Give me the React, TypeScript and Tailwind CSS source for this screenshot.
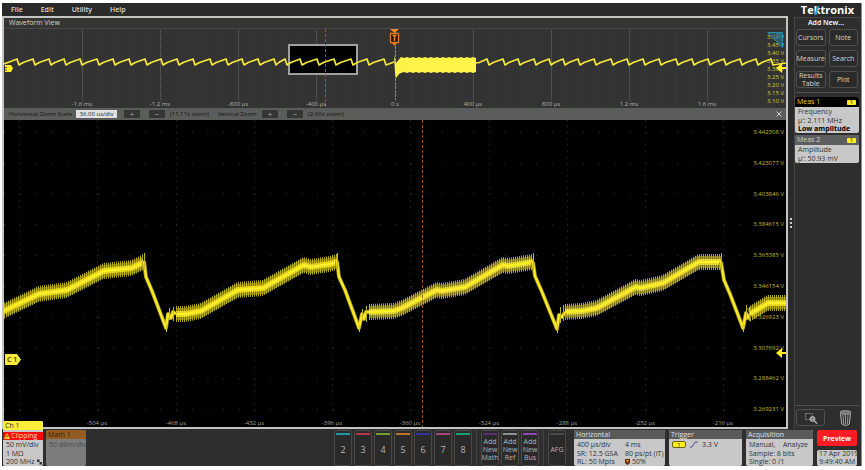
import type { ReactNode } from "react";
import clsx from "clsx";

type Point = [number, number];

const OVERVIEW = { w: 782, h: 79 };
const ZOOMED = { w: 782, h: 307 };

const MENU = ["File", "Edit", "Utility", "Help"];

const OVERVIEW_TIMES = [
  { x: 78, label: "-1.6 ms" },
  { x: 156, label: "-1.2 ms" },
  { x: 234, label: "-800 µs" },
  { x: 312, label: "-400 µs" },
  { x: 391, label: "0 s" },
  { x: 469, label: "400 µs" },
  { x: 547, label: "800 µs" },
  { x: 625, label: "1.2 ms" },
  { x: 703, label: "1.6 ms" },
];

const OVERVIEW_VOLTS = ["3.50 V", "3.45 V", "3.40 V", "3.35 V", "3.30 V", "3.25 V", "3.20 V", "3.15 V", "3.10 V"];

const ZOOMED_TIMES = [
  { x: 15, label: "-540 µs" },
  { x: 93, label: "-504 µs" },
  { x: 172, label: "-468 µs" },
  { x: 250, label: "-432 µs" },
  { x: 328, label: "-396 µs" },
  { x: 406, label: "-360 µs" },
  { x: 485, label: "-324 µs" },
  { x: 563, label: "-288 µs" },
  { x: 641, label: "-252 µs" },
  { x: 719, label: "-216 µs" },
];

const ZOOMED_VOLTS = [
  "3.442308 V",
  "3.423077 V",
  "3.403846 V",
  "3.384615 V",
  "3.365385 V",
  "3.346154 V",
  "3.326923 V",
  "3.307692 V",
  "3.288462 V",
  "3.269231 V",
];

const CHANNELS = [
  { label: "2", color: "bg-[#1f9aa0]" },
  { label: "3", color: "bg-[#b03a48]" },
  { label: "4", color: "bg-[#76a030]" },
  { label: "5", color: "bg-[#c07428]" },
  { label: "6", color: "bg-[#32329a]" },
  { label: "7", color: "bg-[#a8437c]" },
  { label: "8", color: "bg-[#14a070]" },
];

const ADD_NEW = [
  { label: "Math", color: "bg-[#5c2d70]" },
  { label: "Ref", color: "bg-[#8a9096]" },
  { label: "Bus", color: "bg-[#8a4bb8]" },
];

// Slow ramps of the zoomed trace, these carry the switching ripple
const RAMPS: Point[][] = [
  [[0, 191], [35, 174], [63, 170], [100, 151], [128, 148], [140, 142]],
  [[172, 194], [182, 194], [197, 191], [234, 170], [259, 168], [300, 145], [307, 147], [326, 144], [333, 142]],
  [[365, 192], [390, 191], [398, 188], [433, 170], [438, 171], [461, 167], [499, 145], [504, 146], [529, 142]],
  [[561, 192], [578, 191], [593, 188], [632, 167], [637, 168], [659, 163], [695, 142], [717, 142]],
  [[746, 194], [764, 183], [782, 183]],
];

const DROPS: Point[][] = [
  [[140, 141], [142, 157], [148, 171], [162, 208], [164, 194], [167, 198], [169, 192], [172, 194]],
  [[333, 141], [335, 157], [341, 170], [355, 208], [358, 194], [360, 199], [362, 192], [365, 192]],
  [[529, 142], [531, 156], [538, 172], [553, 209], [555, 195], [558, 197], [561, 192]],
  [[717, 142], [720, 160], [726, 174], [739, 208], [742, 193], [744, 198], [746, 194]],
];

// x of every peak in the overview trace
const PEAKS_BEFORE = [13, 29, 45, 60, 76, 93, 109, 125, 141, 157, 173, 189, 206, 222, 238, 254, 270, 281, 296, 313, 330, 347, 363, 380];
const PEAKS_AFTER = [483, 499, 514, 530, 545, 559, 574, 590, 607, 623, 639, 655, 672, 688, 704, 720, 736, 752, 767];

const toPoints = (pts: Point[]) => pts.map((p) => p.join(",")).join(" ");

function yAt(pts: Point[], x: number) {
  for (let i = 1; i < pts.length; i++) {
    const [x0, y0] = pts[i - 1];
    const [x1, y1] = pts[i];
    if (x <= x1) return y0 + ((y1 - y0) * (x - x0)) / (x1 - x0);
  }
  return pts[pts.length - 1][1];
}

function ripplePath(pts: Point[], amplitude: number) {
  let d = "";
  for (let x = pts[0][0] + 1; x < pts[pts.length - 1][0] + 1; x += 2) {
    const y = yAt(pts, x);
    d += `M${x - 0.5} ${(y - amplitude).toFixed(1)}V${(y + amplitude).toFixed(1)}`;
  }
  return d;
}

function sawtooth(start: Point, peaks: number[], end: Point) {
  const pts: Point[] = [start];
  peaks.forEach((x) => {
    const from = pts[pts.length - 1][0];
    const span = x - from;
    pts.push([from + span * 0.3, 33.5], [from + span * 0.6, 32], [x, 30], [x + 2, 36]);
  });
  pts.push(end);
  return toPoints(pts);
}

function rippleBurst() {
  let top = "";
  let bottom = "";
  for (let x = 397; x <= 472; x += 3) {
    top += `L${x} ${x % 2 ? 28 : 29}`;
    bottom = `L${x} ${x % 2 ? 44 : 43}` + bottom;
  }
  return `M390 26L392 34${top}${bottom}L395 45L392 49L391 44Z`;
}

interface AxisLabelProps {
  left?: number;
  top?: number;
  className?: string;
  children: ReactNode;
}

function AxisLabel({ left, top, className, children }: AxisLabelProps) {
  return (
    <span
      className={clsx("absolute whitespace-nowrap text-[6px] leading-[8px]", className)}
      style={{
        left: left === undefined ? undefined : `${left}%`,
        top: top === undefined ? undefined : `${top}%`,
      }}
    >
      {children}
    </span>
  );
}

function LevelArrow({ className }: { className: string }) {
  return (
    <svg viewBox="0 0 10 10" className={clsx("absolute right-0 h-[10px] w-[10px]", className)}>
      <path d="M0 5L6 0V4H10V6H6V10Z" fill="#ffee22" />
    </svg>
  );
}

function Overview() {
  return (
    <div className="relative h-[79px] shrink-0 overflow-hidden bg-[#333333]">
      <svg
        viewBox={`0 0 ${OVERVIEW.w} ${OVERVIEW.h}`}
        preserveAspectRatio="none"
        className="absolute inset-0 h-full w-full"
      >
        {Array.from({ length: 9 }, (_, i) => (
          <line key={i} x1="15.5" x2="760" y1={8.5 + i * 8} y2={8.5 + i * 8} stroke="#505050" strokeDasharray="1 14.64" />
        ))}
        {OVERVIEW_TIMES.map((t) => (
          <line key={t.label} x1={t.x + 0.5} x2={t.x + 0.5} y1="1" y2="71" stroke={t.x === 391 ? "#8a8a8a" : "#555555"} strokeDasharray="3 1" />
        ))}
        <rect x="285" y="16" width="68" height="29" fill="#000000" stroke="#a0a0a0" strokeWidth="2" />
        <line x1="321.5" x2="321.5" y1="0" y2="79" stroke="#8a6034" strokeDasharray="3 2" />
        <g fill="none" stroke="#f5e83a" strokeWidth="1.7" strokeLinejoin="round">
          <polyline points={sawtooth([0, 35], PEAKS_BEFORE, [390, 33])} />
          <polyline points={sawtooth([472, 34], PEAKS_AFTER, [782, 34])} />
        </g>
        <path d={rippleBurst()} fill="#fff34a" />
        {/* trigger marker */}
        <path d="M386 0H395L390.5 4Z" fill="#f58a25" />
        <path d="M386.5 4.5H394.5V13.5H386.5Z" fill="#1e1208" stroke="#e07a20" strokeWidth="1.3" />
        <path d="M388 14H393L390.5 17Z" fill="#e07a20" />
        <path d="M388.5 6.5H392.5M390.5 6.5V12" stroke="#f58a25" strokeWidth="1.5" />
        {/* channel marker */}
        <path d="M1 36H7L9 39.5L7 43H1Z" fill="#ffee22" />
        <path d="M1 38.5H3M1 41H3" stroke="#57501a" />
      </svg>
      {OVERVIEW_TIMES.map((t) => (
        <AxisLabel key={t.label} left={(t.x / OVERVIEW.w) * 100} className="bottom-0 -translate-x-1/2 text-[#b4b4b4]">
          {t.label}
        </AxisLabel>
      ))}
      {OVERVIEW_VOLTS.map((v, i) => (
        <AxisLabel key={v} top={((4 + i * 8) / OVERVIEW.h) * 100} className="right-[2px] text-[#d6cc38]">
          {v}
        </AxisLabel>
      ))}
      <svg viewBox="0 0 16 16" className="absolute right-[3px] top-[3px] h-4 w-4" fill="none" stroke="#2390ac">
        <path d="M0.5 0.5H15.5V15.5Z" fill="#38616c" fillOpacity="0.8" />
        <circle cx="12" cy="3.5" r="2" />
        <path d="M10.5 5L8 7.5" />
      </svg>
      <LevelArrow className="top-[34px]" />
    </div>
  );
}

function ZoomStep({ label, sign }: { label: string; sign: string }) {
  return (
    <button
      type="button"
      aria-label={label}
      className="flex h-2 w-4 items-center justify-center rounded-[1px] bg-[#353535] text-[8px] leading-none text-[#a8a8a8]"
    >
      {sign}
    </button>
  );
}

function ZoomBar() {
  return (
    <div className="flex h-3 shrink-0 items-center bg-[#5b5d5b] pl-[5px] pr-1 text-[6px] text-[#111111]">
      <label htmlFor="zoom-scale" className="w-[67px] whitespace-nowrap">
        Horizontal Zoom Scale
      </label>
      <input
        id="zoom-scale"
        defaultValue="36.00 us/div"
        className="h-2 w-[41px] bg-[#e0e0e0] text-center text-[6px] leading-[8px] text-[#222222]"
      />
      <div className="ml-[7px] flex gap-[9px]">
        <ZoomStep label="Increase horizontal zoom" sign="+" />
        <ZoomStep label="Decrease horizontal zoom" sign="−" />
      </div>
      <span className="ml-[5px] w-12 whitespace-nowrap">(11.11x zoom)</span>
      <span className="w-11 whitespace-nowrap">Vertical Zoom</span>
      <div className="flex gap-[9px]">
        <ZoomStep label="Increase vertical zoom" sign="+" />
        <ZoomStep label="Decrease vertical zoom" sign="−" />
      </div>
      <span className="ml-[5px] whitespace-nowrap">(2.60x zoom)</span>
      <button type="button" aria-label="Close zoom" className="ml-auto">
        <svg viewBox="0 0 6 6" className="h-[6px] w-[6px]">
          <path d="M0.5 0.5L5.5 5.5M5.5 0.5L0.5 5.5" stroke="#d0d0d0" />
        </svg>
      </button>
    </div>
  );
}

function ZoomedView() {
  return (
    <div className="relative min-h-0 flex-1 overflow-hidden bg-black">
      <svg
        viewBox={`0 0 ${ZOOMED.w} ${ZOOMED.h}`}
        preserveAspectRatio="none"
        className="absolute inset-0 h-full w-full"
      >
        {ZOOMED_VOLTS.map((v, i) => (
          <line key={v} x1="0" x2="750" y1={12.5 + i * 30.8} y2={12.5 + i * 30.8} stroke="#3a3a3a" strokeDasharray="1 14.65" />
        ))}
        {ZOOMED_TIMES.map((t) => (
          <line key={t.label} x1={t.x + 0.5} x2={t.x + 0.5} y1="0" y2="296" stroke="#303030" strokeDasharray="1 5.16" />
        ))}
        {RAMPS.map((pts, i) => (
          <g key={i} fill="none">
            <polyline points={toPoints(pts)} stroke="#7c7416" strokeWidth="12" />
            <path d={ripplePath(pts, 8)} stroke="#b4a820" />
            <polyline points={toPoints(pts)} stroke="#d2c424" strokeWidth="6" />
            <path d={ripplePath(pts, 3)} stroke="#f0e02a" />
            <polyline points={toPoints(pts)} stroke="#ffee2a" strokeWidth="2.5" />
          </g>
        ))}
        {DROPS.map((pts, i) => (
          <g key={i} fill="none" strokeLinejoin="round">
            <polyline points={toPoints(pts)} stroke="#8f8518" strokeWidth="4" />
            <polyline points={toPoints(pts)} stroke="#f8e828" strokeWidth="2.5" />
          </g>
        ))}
        {/* ringing right after each drop */}
        <path
          d="M140.5 133V150M333.5 133V150M529.5 133V150M717.5 133V150M165.5 188V200M169.5 187V201M358.5 189V200M362.5 186V202M556.5 187V203M559.5 185V201M742.5 185V200M745.5 187V201"
          stroke="#c4b822"
        />
        <path d="M162.5 204V212M355.5 204V212M553.5 204V213M739.5 204V212" stroke="#d8ca24" />
        <line x1="418.5" x2="418.5" y1="0" y2="307" stroke="#9a5518" strokeDasharray="3 2" />
      </svg>
      {ZOOMED_TIMES.map((t) => (
        <AxisLabel key={t.label} left={(t.x / ZOOMED.w) * 100} className="bottom-0 -translate-x-1/2 text-[#a0a0a0]">
          {t.label}
        </AxisLabel>
      ))}
      {ZOOMED_VOLTS.map((v, i) => (
        <AxisLabel key={v} top={((8 + i * 30.8) / ZOOMED.h) * 100} className="right-[2px] text-[#c4ba34]">
          {v}
        </AxisLabel>
      ))}
      <div className="absolute left-[1px] top-[234px] flex h-[11px] w-4 items-center text-[#3a3610]">
        <svg viewBox="0 0 16 11" className="absolute inset-0 h-full w-full">
          <path d="M0 0H12L16 5.5L12 11H0Z" fill="#f8ea3a" />
        </svg>
        <span className="relative pl-[2px] text-[7px] font-semibold leading-none">C 1</span>
      </div>
      <LevelArrow className="top-[228px]" />
    </div>
  );
}

function Logo() {
  return (
    <div className="flex h-[14px] items-center justify-end pr-[7px] text-[11px] font-bold leading-[14px] text-white">
      <span className="relative">
        Tektronix
        <svg viewBox="0 0 5 10" className="absolute left-[13px] top-[2px] h-[10px] w-[5px]">
          <path d="M3 1H5L2.5 10H0.5Z" fill="#22a6d8" />
        </svg>
      </span>
    </div>
  );
}

function SideButton({ children }: { children: ReactNode }) {
  return (
    <button
      type="button"
      className="flex h-[17px] items-center justify-center rounded-[3px] border border-[#505050] bg-[#2b2b2b] text-center text-[7px] leading-[8px] text-[#d4d4d4]"
    >
      {children}
    </button>
  );
}

interface MeasurementProps {
  title: string;
  active?: boolean;
  lines: string[];
  warning?: string;
}

function Measurement({ title, active, lines, warning }: MeasurementProps) {
  return (
    <section className="overflow-hidden rounded-[2px] bg-[#c8c8c8] text-[7px] text-[#333333]">
      <header
        className={clsx(
          "flex h-[10px] items-center justify-between pl-[2px] pr-[3px] leading-[10px]",
          active ? "bg-black text-[#e8dc28]" : "bg-[#5c5e60] text-[#d0d0d0]",
        )}
      >
        <h3>{title}</h3>
        <span className="flex h-[5px] w-[9px] justify-center rounded-[1px] bg-[#ffee22] text-[5px] font-bold leading-[5px] text-[#6b6214]">
          1
        </span>
      </header>
      <div className="px-[3px] leading-[9px]">
        {lines.map((line) => (
          <p key={line} className="whitespace-nowrap">{line}</p>
        ))}
        {warning && <p className="whitespace-nowrap font-bold leading-[8px] text-black">{warning}</p>}
      </div>
    </section>
  );
}

function Sidebar() {
  return (
    <aside className="flex w-[74px] shrink-0 flex-col border-r border-[#8a8a8a]">
      <Logo />
      <div className="flex min-h-0 flex-1">
        <div className="flex w-[6px] flex-col items-center justify-center gap-[2px]">
          {[0, 1, 2].map((i) => (
            <span key={i} className="h-[2px] w-[2px] bg-[#cccccc]" />
          ))}
        </div>
        <div className="flex flex-1 flex-col border-l border-t border-[#454545] bg-[#2e2e2e] pr-[2px]">
          <h2 className="pr-[2px] text-center text-[7px] font-semibold leading-[10px] text-white">Add New...</h2>
          <div className="mx-[1px] mt-[1px] grid grid-cols-2 gap-x-[3px] gap-y-1">
            <SideButton>Cursors</SideButton>
            <SideButton>Note</SideButton>
            <SideButton>Measure</SideButton>
            <SideButton>Search</SideButton>
            <SideButton>
              Results
              <br />
              Table
            </SideButton>
            <SideButton>Plot</SideButton>
          </div>
          <div className="mt-1 flex flex-col gap-[2px] border-t border-[#505050] pt-1">
            <Measurement title="Meas 1" active lines={["Frequency", "µ': 2.111 MHz"]} warning="Low amplitude" />
            <Measurement title="Meas 2" lines={["Amplitude", "µ': 50.93 mV"]} />
          </div>
          <div className="mt-auto flex items-center justify-between border-t border-[#505050] py-[3px] pl-[1px] pr-[7px]">
            <button
              type="button"
              aria-label="Zoom to area"
              className="flex h-[17px] w-[29px] items-center justify-center rounded-[3px] border border-[#505050]"
            >
              <svg viewBox="0 0 14 12" className="h-3 w-[14px]" fill="none" stroke="#b0b0b0">
                <path d="M1.5 1.5H8.5V7.5H1.5Z" strokeDasharray="2 1" stroke="#858585" />
                <circle cx="8.5" cy="7" r="2.5" fill="#8c8c8c" />
                <path d="M10.5 9L13 11.5" strokeWidth="1.5" />
              </svg>
            </button>
            <button type="button" aria-label="Delete">
              <svg viewBox="0 0 13 16" className="h-4 w-[13px]" fill="none" stroke="#b4b4b4">
                <ellipse cx="6.5" cy="2.5" rx="5.5" ry="1.7" fill="#6c6c6c" />
                <path d="M1.5 4L2.8 14C4 15.8 9 15.8 10.2 14L11.5 4" />
                <path d="M4 5L4.7 14M6.5 5V14.5M9 5L8.3 14" strokeWidth="0.8" />
              </svg>
            </button>
          </div>
        </div>
      </div>
    </aside>
  );
}

function SourceButton({ color, className, children }: { color: string; className?: string; children: ReactNode }) {
  return (
    <button
      type="button"
      className="flex h-full w-[18px] flex-col items-center rounded-[3px] border border-[#4c4846] bg-[#2a2a2a] px-[1px] pt-[2px] text-[#b4b4b4]"
    >
      <span className={clsx("h-[2px] w-[14px]", color)} />
      <span className={clsx("flex flex-1 items-center text-center", className)}>{children}</span>
    </button>
  );
}

function InfoPanel({ title, className, children }: { title: string; className: string; children: ReactNode }) {
  return (
    <section className={clsx("flex flex-col overflow-hidden rounded-[2px] bg-[#c8c8c8] text-[7px] text-[#333333]", className)}>
      <h3 className="bg-[#5a5a5a] pl-[2px] leading-[9px] text-[#e0e0e0]">{title}</h3>
      {children}
    </section>
  );
}

function BottomBar() {
  return (
    <footer className="flex h-[37px] shrink-0 border-r border-[#8a8a8a] bg-[#2e2e2e] pl-[1px] pr-1">
      <section className="relative -mt-[8px] flex w-10 flex-col overflow-hidden rounded-[2px] bg-[#c8c8c8] text-[7px] leading-[9px] text-[#333333]">
        <h3 className="bg-[#ffee3a] pl-[2px] leading-[9px]">Ch 1</h3>
        <p className="mt-[2px] flex items-center gap-[1px] bg-[#fa0a0a] pl-[1px] leading-[8px] text-[#ffd0c8]">
          <svg viewBox="0 0 6 6" className="h-[6px] w-[6px]">
            <path d="M3 0L6 6H0Z" fill="#ffe020" />
            <path d="M3 2V4.5" stroke="#5a2a00" strokeWidth="0.8" />
          </svg>
          Clipping
        </p>
        <p className="pl-[3px]">50 mV/div</p>
        <p className="pl-[3px]">1 MΩ</p>
        <p className="flex items-center justify-between whitespace-nowrap pl-[3px] pr-[1px] leading-[8px]">
          200 MHz
          <svg viewBox="0 0 6 6" className="h-[6px] w-[5px]" fill="#333333">
            <path d="M0 0H3V3H0ZM3 3H6V6H3Z" />
          </svg>
        </p>
      </section>
      <section className="ml-[3px] mt-[1px] w-10 overflow-hidden rounded-[2px] bg-[#7c7c7c] text-[7px] text-[#4c4c4c]">
        <h3 className="bg-[#925c22] pl-[2px] leading-[9px] text-[#3a2206]">Math 1</h3>
        <p className="whitespace-nowrap pl-[3px] leading-[11px]">50 dBm/div</p>
      </section>

      <div className="ml-auto flex gap-1 pt-[1px]">
        <div className="flex gap-[2px]">
          {CHANNELS.map((ch) => (
            <SourceButton key={ch.label} color={ch.color} className="text-[9px]">
              {ch.label}
            </SourceButton>
          ))}
        </div>
        <div className="flex gap-[2px] border-l border-[#444444] pl-1">
          {ADD_NEW.map((item) => (
            <SourceButton key={item.label} color={item.color} className="text-[7px] leading-[8px]">
              Add
              <br />
              New
              <br />
              {item.label}
            </SourceButton>
          ))}
        </div>
        <div className="flex border-l border-[#444444] pl-1">
          <SourceButton color="bg-[#4a4a4a]" className="text-[7px]">
            AFG
          </SourceButton>
        </div>
        <InfoPanel title="Horizontal" className="ml-1 w-[91px]">
          <div className="grid grid-cols-[48px_1fr] whitespace-nowrap pl-[3px] pt-[1px] leading-[9px]">
            <span>400 µs/div</span>
            <span>4 ms</span>
            <span>SR: 12.5 GSA</span>
            <span>80 ps/pt (IT)</span>
            <span className="leading-[8px]">RL: 50 Mpts</span>
            <span className="flex items-center gap-[2px] leading-[8px]">
              <svg viewBox="0 0 5 6" className="h-[6px] w-[5px]">
                <path d="M0 0H5V4L2.5 6L0 4Z" fill="#5a2a08" />
                <path d="M1 1H4L2.5 4Z" fill="#f58a25" />
              </svg>
              50%
            </span>
          </div>
        </InfoPanel>
        <InfoPanel title="Trigger" className="w-[73px]">
          <div className="flex items-center pl-[3px] pt-[1px] leading-[9px]">
            <span className="flex h-[7px] w-[14px] items-center justify-center rounded-[2px] border border-[#6b6214] bg-[#ffee22] text-[6px] leading-none">
              1
            </span>
            <svg viewBox="0 0 8 7" className="ml-1 h-[7px] w-2">
              <path d="M0 6H2L5 1H8" fill="none" stroke="#50508a" />
            </svg>
            <span className="ml-1">3.3 V</span>
          </div>
        </InfoPanel>
        <InfoPanel title="Acquisition" className="w-[67px]">
          <div className="whitespace-nowrap px-[3px] pt-[1px] leading-[9px]">
            <p className="flex justify-between pr-[2px]">
              <span>Manual,</span>
              <span>Analyze</span>
            </p>
            <p>Sample: 8 bits</p>
            <p className="leading-[8px]">Single: 0 /1</p>
          </div>
        </InfoPanel>
        <div className="flex w-10 flex-col justify-between">
          <button type="button" className="h-4 rounded-[2px] bg-[#ff1c24] text-[7px] font-bold leading-none text-white">
            Preview
          </button>
          <p className="rounded-[2px] bg-[#c8c8c8] pl-[2px] text-[7px] leading-[8px] text-[#333333]">
            <span className="block whitespace-nowrap">17 Apr 2019</span>
            <span className="block whitespace-nowrap">9:49:40 AM</span>
          </p>
        </div>
      </div>
    </footer>
  );
}

export default function App() {
  return (
    <div className="flex h-screen min-h-[470px] flex-col bg-white pb-1 pl-[2px] pr-[3px] pt-[3px] font-['Open_Sans','Noto_Sans',sans-serif]">
      <div className="flex min-h-0 flex-1 bg-[#2a2a2a]">
        <div className="flex min-w-0 flex-1 flex-col">
          <nav className="flex h-[13px] shrink-0 items-center gap-[18px] pl-[9px] text-[7px] font-semibold leading-none text-[#dcdcdc]">
            {MENU.map((item) => (
              <button key={item} type="button">{item}</button>
            ))}
          </nav>
          <main className="flex min-h-0 flex-1 flex-col border-2 border-[#c4c4c4]">
            <h1 className="h-[11px] shrink-0 border-b border-[#484848] bg-[#353532] pl-[5px] text-[7px] leading-[10px] text-[#d4d4d4]">
              Waveform View
            </h1>
            <Overview />
            <ZoomBar />
            <ZoomedView />
          </main>
        </div>
        <Sidebar />
      </div>
      <BottomBar />
    </div>
  );
}
